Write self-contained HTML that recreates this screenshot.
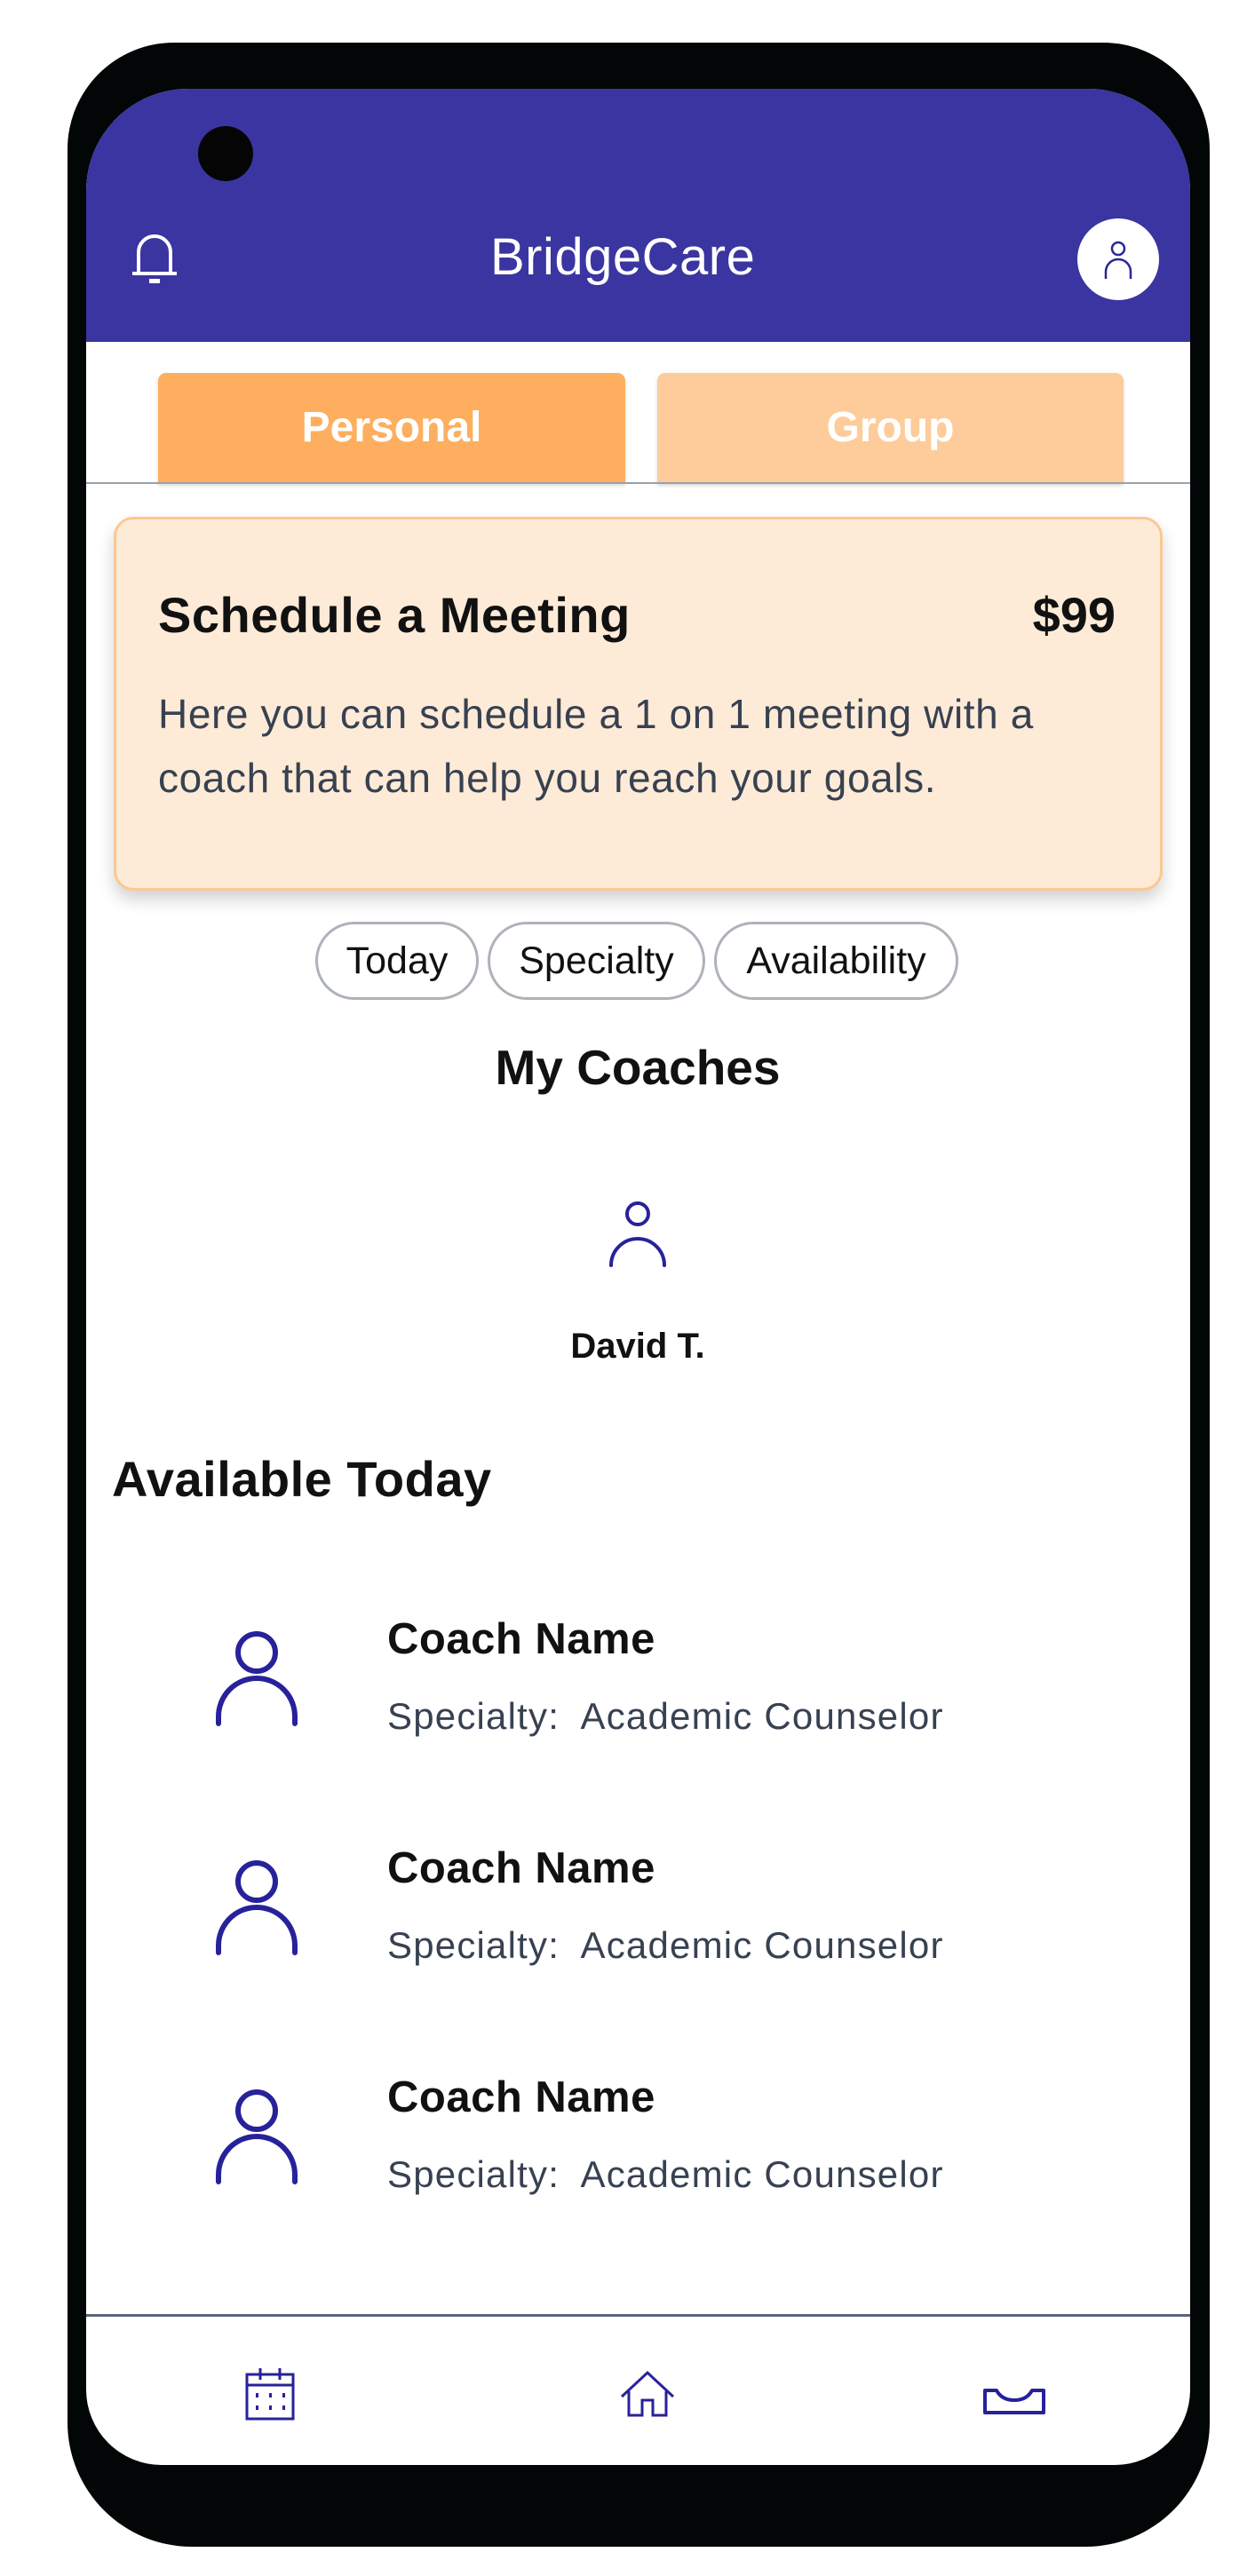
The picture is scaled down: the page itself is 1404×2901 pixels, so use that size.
<!DOCTYPE html>
<html><head><meta charset="utf-8">
<style>
*{margin:0;padding:0;box-sizing:border-box}
body{width:1404px;height:2901px;background:#fff;position:relative;overflow:hidden;font-family:"Liberation Sans",sans-serif}
.a{position:absolute}
.phone{left:76px;top:48px;width:1286px;height:2820px;background:#030606;border-radius:120px 120px 140px 140px}
.screen{left:97px;top:100px;width:1243px;height:2676px;background:#fff;border-radius:115px 115px 85px 85px;overflow:hidden}
.hdr{left:0;top:0;width:1243px;height:285px;background:#3a35a0}
.t{white-space:nowrap}
.pill{top:1038px;height:88px;border:3px solid #aeb3ba;border-radius:44px;font-size:43px;color:#111;text-align:center;line-height:82px}
.cn{font-size:49px;font-weight:bold;color:#111;letter-spacing:0.5px}
.sp{font-size:42px;color:#374151;letter-spacing:1.2px}
</style></head><body>
<div class="a phone"></div>
<div class="a screen">
  <div class="a hdr"></div>
</div>
<div class="a" style="left:223px;top:142px;width:62px;height:62px;border-radius:50%;background:#050505"></div>
<svg class="a" style="left:146px;top:262px" width="56" height="60" viewBox="0 0 56 60">
<path d="M10 46 V22 A18 18 0 0 1 46 22 V46" fill="none" stroke="#fff" stroke-width="4"/>
<path d="M3 46 H53" stroke="#fff" stroke-width="4"/>
<rect x="22" y="52" width="12" height="5" fill="#fff"/>
</svg>
<div class="a t" style="left:552px;top:256px;font-size:58px;color:#fff;letter-spacing:0.5px">BridgeCare</div>
<div class="a" style="left:1213px;top:246px;width:92px;height:92px;border-radius:50%;background:#fff"></div>
<svg class="a" style="left:1236px;top:268px" width="46" height="50" viewBox="0 0 46 50">
<circle cx="23" cy="12" r="7" fill="none" stroke="#2a2595" stroke-width="2.5"/>
<path d="M9 46 V38 A14 14 0 0 1 37 38 V46" fill="none" stroke="#2a2595" stroke-width="2.5"/>
</svg>
<div class="a" style="left:178px;top:420px;width:526px;height:125px;background:#fdaf5f;border-radius:9px 9px 0 0;box-shadow:0 2px 4px rgba(0,0,0,.15);color:#fff;font-size:48px;font-weight:bold;text-align:center;line-height:124px">Personal</div>
<div class="a" style="left:740px;top:420px;width:525px;height:125px;background:#fdcc9a;border-radius:9px 9px 0 0;box-shadow:0 2px 4px rgba(0,0,0,.15);color:#fff;font-size:48px;font-weight:bold;text-align:center;line-height:124px">Group</div>
<div class="a" style="left:97px;top:543px;width:1243px;height:2px;background:#9aa0ab"></div>
<div class="a" style="left:128px;top:582px;width:1181px;height:421px;background:#feebd7;border:3px solid #fcc890;border-radius:22px;box-shadow:0 10px 18px rgba(0,0,0,.18)"></div>
<div class="a t" style="left:178px;top:660px;font-size:56px;font-weight:bold;color:#111;letter-spacing:0.5px">Schedule a Meeting</div>
<div class="a t" style="left:1130px;top:660px;width:126px;text-align:right;font-size:56px;font-weight:bold;color:#111">$99</div>
<div class="a" style="left:178px;top:768px;width:1100px;font-size:46px;line-height:72px;color:#374151;letter-spacing:0.6px">Here you can schedule a 1 on 1 meeting with a<br>coach that can help you reach your goals.</div>
<div class="a pill" style="left:355px;width:184px">Today</div>
<div class="a pill" style="left:549px;width:245px">Specialty</div>
<div class="a pill" style="left:804px;width:275px">Availability</div>
<div class="a t" style="left:418px;top:1170px;width:600px;text-align:center;font-size:55px;font-weight:bold;color:#111">My Coaches</div>
<svg class="a" style="left:684px;top:1352px" width="68" height="76" viewBox="0 0 68 76">
<circle cx="34" cy="15" r="12" fill="none" stroke="#27229a" stroke-width="4"/>
<path d="M4 73 A30 30 0 0 1 64 73" fill="none" stroke="#27229a" stroke-width="4" stroke-linecap="round"/>
</svg>
<div class="a t" style="left:518px;top:1494px;width:400px;text-align:center;font-size:40px;font-weight:bold;color:#111">David T.</div>
<div class="a t" style="left:126px;top:1633px;font-size:56px;font-weight:bold;color:#111;letter-spacing:0.5px">Available Today</div>
<svg class="a" style="left:242px;top:1837px" width="94" height="110" viewBox="0 0 94 110">
<circle cx="47" cy="24" r="21" fill="none" stroke="#27229a" stroke-width="6"/>
<path d="M4 104 V96 A43 43 0 0 1 90 96 V104" fill="none" stroke="#27229a" stroke-width="6" stroke-linecap="round"/>
</svg>
<div class="a t cn" style="left:436px;top:1818px">Coach Name</div>
<div class="a t sp" style="left:436px;top:1909px">Specialty:&nbsp; Academic Counselor</div>
<svg class="a" style="left:242px;top:2095px" width="94" height="110" viewBox="0 0 94 110">
<circle cx="47" cy="24" r="21" fill="none" stroke="#27229a" stroke-width="6"/>
<path d="M4 104 V96 A43 43 0 0 1 90 96 V104" fill="none" stroke="#27229a" stroke-width="6" stroke-linecap="round"/>
</svg>
<div class="a t cn" style="left:436px;top:2076px">Coach Name</div>
<div class="a t sp" style="left:436px;top:2167px">Specialty:&nbsp; Academic Counselor</div>
<svg class="a" style="left:242px;top:2353px" width="94" height="110" viewBox="0 0 94 110">
<circle cx="47" cy="24" r="21" fill="none" stroke="#27229a" stroke-width="6"/>
<path d="M4 104 V96 A43 43 0 0 1 90 96 V104" fill="none" stroke="#27229a" stroke-width="6" stroke-linecap="round"/>
</svg>
<div class="a t cn" style="left:436px;top:2334px">Coach Name</div>
<div class="a t sp" style="left:436px;top:2425px">Specialty:&nbsp; Academic Counselor</div>
<div class="a" style="left:97px;top:2606px;width:1243px;height:3px;background:#5a6378"></div>
<svg class="a" style="left:275px;top:2666px" width="60" height="60" viewBox="0 0 60 60">
<rect x="3" y="8" width="52" height="50" fill="none" stroke="#27229a" stroke-width="3"/>
<path d="M3 20 H55" stroke="#27229a" stroke-width="3"/>
<path d="M18 1 V14 M40 1 V14" stroke="#27229a" stroke-width="3"/>
<g fill="#27229a"><rect x="13" y="29" width="3" height="5"/><rect x="28" y="29" width="3" height="5"/><rect x="43" y="29" width="3" height="5"/><rect x="13" y="43" width="3" height="5"/><rect x="28" y="43" width="3" height="5"/><rect x="43" y="43" width="3" height="5"/></g>
</svg>
<svg class="a" style="left:698px;top:2669px" width="62" height="54" viewBox="0 0 62 54">
<path d="M2 30 L31 3 L60 30 M10 24 V51 H25 V34 H37 V51 H52 V24" fill="none" stroke="#27229a" stroke-width="3"/>
</svg>
<svg class="a" style="left:1106px;top:2689px" width="72" height="32" viewBox="0 0 72 32">
<path d="M3 3 H16 Q22 14 36 14 Q50 14 56 3 H69 V28 H3 Z" fill="none" stroke="#27229a" stroke-width="4" stroke-linejoin="round"/>
</svg>
</body></html>
